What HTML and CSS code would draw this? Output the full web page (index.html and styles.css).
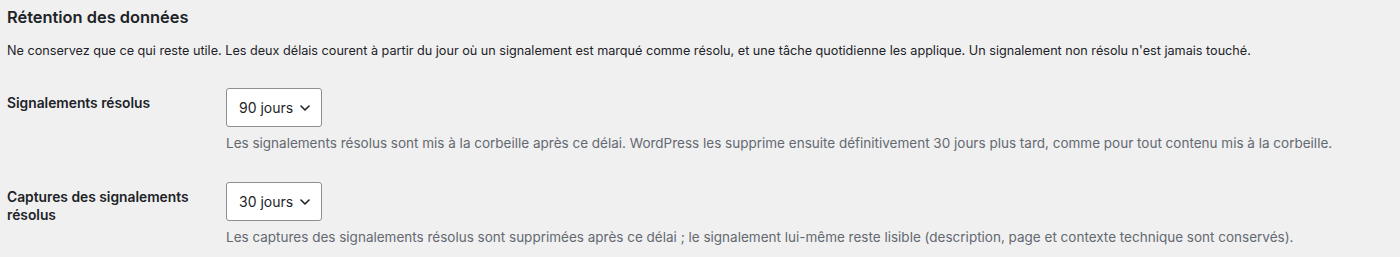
FILE: index.html
```html
<!DOCTYPE html>
<html lang="fr">
<head>
<meta charset="utf-8">
<title>Rétention des données</title>
<link rel="stylesheet" href="styles.css">
</head>
<body>
<div class="wrap">
  <h2 class="title">Rétention des données</h2>
  <p class="intro">Ne conservez que ce qui reste utile. Les deux délais courent à partir du jour où un signalement est marqué comme résolu, et une tâche quotidienne les applique. Un signalement non résolu n'est jamais touché.</p>
  <div class="form-table">
    <div class="row">
      <div class="label"><label for="r1">Signalements résolus</label></div>
      <div class="field">
        <span class="select-wrap">
          <select id="r1" class="select"><option>90 jours</option></select>
          <svg class="chev" width="10" height="6" viewBox="0 0 10 6"><path d="M1 1l4 4 4-4" fill="none" stroke="#1d2327" stroke-width="1.6" stroke-linecap="round" stroke-linejoin="round"/></svg>
        </span>
        <p class="description">Les signalements résolus sont mis à la corbeille après ce délai. WordPress les supprime ensuite définitivement 30 jours plus tard, comme pour tout contenu mis à la corbeille.</p>
      </div>
    </div>
    <div class="row">
      <div class="label"><label for="r2">Captures des signalements résolus</label></div>
      <div class="field">
        <span class="select-wrap">
          <select id="r2" class="select"><option>30 jours</option></select>
          <svg class="chev" width="10" height="6" viewBox="0 0 10 6"><path d="M1 1l4 4 4-4" fill="none" stroke="#1d2327" stroke-width="1.6" stroke-linecap="round" stroke-linejoin="round"/></svg>
        </span>
        <p class="description">Les captures des signalements résolus sont supprimées après ce délai ; le signalement lui-même reste lisible (description, page et contexte technique sont conservés).</p>
      </div>
    </div>
  </div>
</div>
</body>
</html>
```
FILE: styles.css
```css
html, body {
  margin: 0;
  padding: 0;
  background: #f0f0f1;
}
body {
  font-family: Inter, "Liberation Sans", sans-serif;
  font-size: 13px;
  color: #1d2327;
  line-height: 1.4;
}
.wrap {
  padding-left: 7px;
}
.title {
  margin: 6px 0 0;
  font-size: 16.4px;
  font-weight: 600;
  line-height: 22px;
}
.intro {
  margin: 13px 0 0;
  font-size: 12.65px;
  line-height: 20px;
}
.form-table {
  margin-top: 12px;
}
.row {
  display: grid;
  grid-template-columns: 219px 1fr;
}
.label {
  padding: 21px 10px 0 0;
  font-weight: 600;
  font-size: 13.8px;
  line-height: 18px;
  width: 200px;
}
.field {
  padding: 15px 0 14px;
}
.select-wrap {
  position: relative;
  display: inline-block;
}
.select {
  appearance: none;
  -webkit-appearance: none;
  width: 96px;
  height: 39px;
  box-sizing: border-box;
  padding: 0 24px 0 12px;
  border: 1px solid #8c8f94;
  border-radius: 3px;
  background: #fff;
  font: inherit;
  font-size: 14px;
  color: #1d2327;
  display: block;
}
.chev {
  position: absolute;
  right: 12px;
  top: 17px;
  pointer-events: none;
}
.description {
  margin: 6px 0 0;
  color: #646970;
  font-size: 13.5px;
  line-height: 20px;
}
```
